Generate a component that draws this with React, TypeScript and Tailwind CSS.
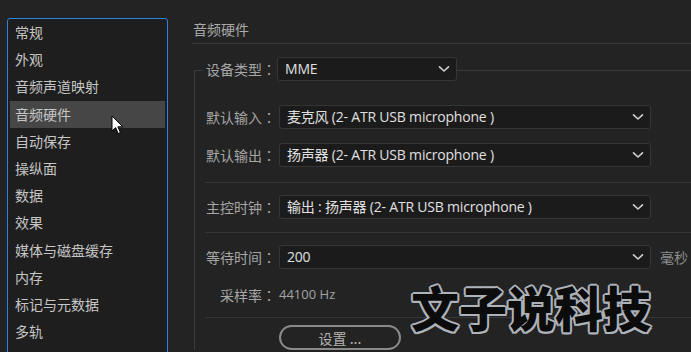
import React from "react";

const items = [
  "常规",
  "外观",
  "音频声道映射",
  "音频硬件",
  "自动保存",
  "操纵面",
  "数据",
  "效果",
  "媒体与磁盘缓存",
  "内存",
  "标记与元数据",
  "多轨",
];

const cjk = "font-['Noto_Sans_CJK_SC','Noto_Sans',sans-serif]";
const latin = "font-['Open_Sans','Noto_Sans_CJK_SC',sans-serif]";

function Chevron() {
  return (
    <svg width="12" height="8" viewBox="0 0 12 8" className="shrink-0">
      <path d="M1.5 1.8 L6 6 L10.5 1.8" fill="none" stroke="#cfcfcf" strokeWidth="1.6" strokeLinecap="round" strokeLinejoin="round" />
    </svg>
  );
}

function Select({ text, className }: { text: string; className: string }) {
  return (
    <div
      className={`h-[24px] flex items-center justify-between rounded-[3px] border border-[#353535] bg-[#1b1b1b] pl-[7px] pr-[6px] ${className}`}
    >
      <span className={`${latin} text-[14px] tracking-[-0.2px] text-[#e0e0e0] whitespace-nowrap leading-none`}>{text}</span>
      <Chevron />
    </div>
  );
}

function Label({ text }: { text: string }) {
  return (
    <div className={`w-[70px] shrink-0 text-right text-[14px] text-[#a6a6a6] ${cjk} whitespace-nowrap leading-none`}>
      {text}
      <span className="font-['Noto_Sans_CJK_TC',sans-serif]">：</span>
    </div>
  );
}

function Sep({ className }: { className: string }) {
  return <div className={`ml-[10px] h-px bg-[#363636] ${className}`} />;
}

export default function App() {
  return (
    <div className="relative w-[691px] h-[352px] overflow-hidden bg-[#232323] flex">
      {/* Left list */}
      <div className="pl-[7px] pt-[18px] shrink-0">
        <div className="w-[161px] h-[340px] border border-[#2b84dc] rounded-t-[3px] bg-[#1e1e1e] px-[2px]">
          {items.map((it, i) => (
            <div
              key={it}
              className={`h-[27.2px] flex items-center pl-[5px] text-[14px] text-[#c6c6c6] ${cjk} ${
                i === 3 ? "bg-[#464646]" : ""
              }`}
            >
              {it}
            </div>
          ))}
        </div>
      </div>

      {/* Right content */}
      <div className="ml-[24px] flex-1 flex flex-col min-w-0">
        <div className="h-[44px] shrink-0 border-b border-[#393939] flex items-end pb-[4px] pl-[1px]">
          <span className={`text-[14px] leading-[20px] text-[#a9a9a9] ${cjk}`}>音频硬件</span>
        </div>

        <div className="ml-[2px] mt-[26px] border-l border-t border-[#3a3a3a] flex flex-col">
          {/* Row 1: device type sits on the fieldset border */}
          <div className="-mt-[14px] flex items-center">
            <div className="ml-[8px] pl-[3px] bg-[#232323] flex items-center">
              <Label text="设备类型" />
              <Select text="MME" className="ml-[1px] w-[180px]" />
            </div>
          </div>

          <div className="mt-[24px] pl-[11px] flex items-center">
            <Label text="默认输入" />
            <Select text="麦克风 (2- ATR USB microphone )" className="ml-[3px] w-[372px]" />
          </div>
          <div className="mt-[14px] pl-[11px] flex items-center">
            <Label text="默认输出" />
            <Select text="扬声器 (2- ATR USB microphone )" className="ml-[3px] w-[372px]" />
          </div>

          <Sep className="mt-[15px]" />

          <div className="mt-[12px] pl-[11px] flex items-center">
            <Label text="主控时钟" />
            <Select text="输出 : 扬声器 (2- ATR USB microphone )" className="ml-[3px] w-[372px]" />
          </div>

          <Sep className="mt-[13px]" />

          <div className="mt-[12px] pl-[11px] flex items-center">
            <Label text="等待时间" />
            <Select text="200" className="ml-[3px] w-[372px]" />
            <span className={`ml-[9px] text-[14px] text-[#8e8e8e] whitespace-nowrap ${cjk}`}>毫秒</span>
          </div>

          <div className="mt-[14px] h-[24px] pl-[11px] flex items-center">
            <Label text="采样率" />
            <span className={`ml-[3px] text-[13px] text-[#a3a3a3] ${latin}`}>44100 Hz</span>
          </div>

          <Sep className="mt-[10px]" />

          <div className="mt-[7px] pl-[84px] flex">
            <div className="w-[122px] h-[25px] rounded-full border-2 border-[#8a8a8a] flex items-center justify-center">
              <span className={`text-[14px] text-[#b4b4b4] ${cjk} leading-none`}>设置 ...</span>
            </div>
          </div>
        </div>
      </div>

      {/* Mouse cursor */}
      <svg className="absolute left-[111px] top-[115px]" width="13" height="20" viewBox="0 0 13 20">
        <path d="M1 1 L1 16 L4.6 12.6 L7.2 18.6 L9.4 17.6 L6.9 11.8 L11.8 11.8 Z" fill="#ffffff" stroke="#000000" strokeWidth="1" strokeLinejoin="round" />
      </svg>

      {/* Watermark */}
      <div
        className={`absolute left-[411px] top-[276px] text-[48px] leading-[60px] font-black text-[#0c0c0c] tracking-[0px] whitespace-nowrap ${cjk} [text-shadow:2px_0_#aeb2b9,-2px_0_#aeb2b9,0_2px_#aeb2b9,0_-2px_#aeb2b9,1.5px_1.5px_#aeb2b9,-1.5px_1.5px_#aeb2b9,1.5px_-1.5px_#aeb2b9,-1.5px_-1.5px_#aeb2b9]`}
      >
        文子说科技
      </div>
    </div>
  );
}
